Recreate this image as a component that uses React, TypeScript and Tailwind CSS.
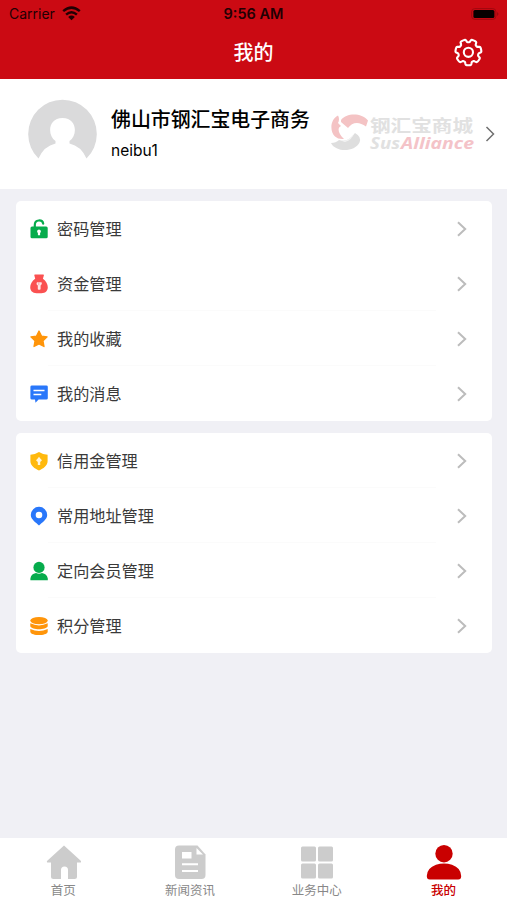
import type { ReactNode } from "react";

type Row = { label: string; icon: ReactNode; divider?: string };

// Seven-toothed cog outline built from polar coordinates.
const TEETH = 7;
const cogPath = (() => {
  const steps = 140;
  const points: string[] = [];
  for (let i = 0; i < steps; i++) {
    const a = (i / steps) * Math.PI * 2;
    const wave = Math.cos(TEETH * (a - Math.PI / 2));
    const r = 11.5 + 1.5 * Math.tanh(wave * 2.8 + 0.9);
    points.push(`${(15.4 + r * Math.cos(a)).toFixed(2)} ${(15.3 + r * Math.sin(a)).toFixed(2)}`);
  }
  return `M${points.join("L")}Z`;
})();

function Cog() {
  return (
    <svg className="h-[30px] w-[30px]" viewBox="0 0 30 30" fill="none" stroke="#fff" strokeWidth="2.1" strokeLinejoin="round">
      <path d={cogPath} />
      <circle cx="15.400" cy="15.300" r="4.600" />
    </svg>
  );
}

function Wifi() {
  return (
    <svg className="h-[15px] w-[19px]" viewBox="0 0 19 15" fill="none" stroke="#220003" strokeWidth="2.5">
      <path d="M1.200 5.100Q9.500-1.900 17.800 5.100" />
      <path d="M4.100 8.600Q9.500 3.900 14.900 8.600" />
      <path d="M9.500 14.200 6.200 11Q9.500 8.200 12.800 11Z" fill="#220003" stroke="none" />
    </svg>
  );
}

function Chevron() {
  return (
    <svg className="h-4 w-[10px]" viewBox="0 0 10 16" fill="none" stroke="#bcbcbc" strokeWidth="2">
      <path d="M1 1.200 8.200 8 1 14.800" />
    </svg>
  );
}

function Glyph({ children }: { children: ReactNode }) {
  return (
    <svg className="h-5 w-5 shrink-0" viewBox="0 0 20 20">
      {children}
    </svg>
  );
}

const account: Row[] = [
  {
    label: "密码管理",
    icon: (
      <Glyph>
        <path d="M5.800 9V5.900C5.800.2 13.500.2 14.200 4.700" fill="none" stroke="#06ac4c" strokeWidth="2.200" strokeLinecap="round" />
        <rect x="1.500" y="7.400" width="17.200" height="11.800" rx="1.500" fill="#06ac4c" />
        <path d="M10 10.400a2 2 0 0 1 1.100 3.600v2.300H8.900V14A2 2 0 0 1 10 10.400Z" fill="#fff" />
      </Glyph>
    ),
  },
  {
    label: "资金管理",
    divider: "ml-8",
    icon: (
      <Glyph>
        <path d="M5.800.6h8.600q.7 0 .5.700l-1 3.400c6.500 4.400 7 14.500-1.500 14.500H7.600c-8.500 0-8-10.100-1.400-14.500L5.300 1.300Q5.100.6 5.800.6Z" fill="#fa5151" />
        <path d="M8 8.200h4.500q.8 1 0 2.200l-.9 1.100v3.700q-1.500 1-2.800 0v-3.700L7.700 10.400Q7.300 9 8 8.200Z" fill="#fff" opacity=".85" />
        <path d="M9.800 8.200v3" stroke="#fa9a9a" strokeWidth=".8" />
      </Glyph>
    ),
  },
  {
    label: "我的收藏",
    divider: "ml-8",
    icon: (
      <Glyph>
        <path d="m10 2 2.500 5.100 5.600.8-4.100 4 1 5.600-5-2.600-5 2.600 1-5.600-4.100-4 5.600-.8Z" fill="#ff950a" stroke="#ff950a" strokeWidth="1.300" strokeLinejoin="round" />
      </Glyph>
    ),
  },
  {
    label: "我的消息",
    icon: (
      <Glyph>
        <path d="M3 1.400h14.300q1.500 0 1.500 1.400v11.400q0 1.400-1.500 1.400H9.600L6.500 18.700 6 15.600H3Q1.400 15.600 1.400 14.200V2.800Q1.400 1.400 3 1.400Z" fill="#2977fa" />
        <path d="M4.500 6.500h11M4.500 10.400h7.800" stroke="#fff" strokeWidth="1.500" />
      </Glyph>
    ),
  },
];

const members: Row[] = [
  {
    label: "信用金管理",
    divider: "ml-8",
    icon: (
      <Glyph>
        <path d="M10 .9q4.200 2.700 8.600 2.900v6.500c0 4.300-4.300 7.500-8.600 9.100-4.300-1.600-8.600-4.800-8.600-9.100V3.800Q5.800 3.600 10 .9Z" fill="#ffb90d" />
        <path d="M10 5.800 11.300 7.600 13 9.300 11.200 11v2.900H8.800V11L7 9.300 8.700 7.600Z" fill="#fff" opacity=".85" />
      </Glyph>
    ),
  },
  {
    label: "常用地址管理",
    divider: "ml-8",
    icon: (
      <Glyph>
        <path fillRule="evenodd" d="M10 .8a8.100 8.100 0 0 1 8.200 8.100c0 4.500-5.600 7.800-8.200 10.500C7.400 16.700 1.800 13.400 1.800 8.900A8.100 8.100 0 0 1 10 .8Zm0 4.900a3.300 3.300 0 1 0 0 6.600 3.300 3.300 0 0 0 0-6.600Z" fill="#2977fa" />
      </Glyph>
    ),
  },
  {
    label: "定向会员管理",
    divider: "ml-8",
    icon: (
      <Glyph>
        <circle cx="10" cy="6.400" r="5.600" fill="#06ac4c" />
        <path d="M1.400 19.200V17.500Q2 13 7 12.100q3 1.300 6 0 5 .9 5.800 5.400V19.200Z" fill="#06ac4c" />
      </Glyph>
    ),
  },
  {
    label: "积分管理",
    icon: (
      <Glyph>
        <ellipse cx="10" cy="4.600" rx="8.700" ry="3.700" fill="#ff950a" />
        <path d="M1.300 7.300q8.700 4.200 17.400 0v2.900c-1.500 4-15.900 4-17.400 0ZM1.300 12.900q8.700 4.200 17.400 0v3c-1.500 4.200-15.900 4.200-17.400 0Z" fill="#ff950a" />
      </Glyph>
    ),
  },
];

function Card({ rows }: { rows: Row[] }) {
  return (
    <section className="h-[220px] rounded-[5px] bg-white">
      {rows.map((row) => (
        <div key={row.label}>
          <div className={row.divider ? "h-[54px]" : "h-[55px]"}>
            <div className="flex h-[55px] items-center pr-[25px] pl-[13px]">
              {row.icon}
              <span className="ml-[8px] flex-1 text-[16.150px] leading-6 text-[#3a3a3a]">{row.label}</span>
              <Chevron />
            </div>
          </div>
          {row.divider && <div className={`mr-14 h-px bg-[#fbfbfb] ${row.divider}`} />}
        </div>
      ))}
    </section>
  );
}

function Brand() {
  return (
    <div className="flex h-[42px] w-[146px] gap-[2px]">
      <svg className="h-[42px] w-[38px] shrink-0" viewBox="0 0 38 42">
        <path d="M8 2.500C-.5 7 0 19 5 23.500Q8 26.500 14 26C8 20 7 15 11 13L8 10Q10 6 8 2.500Z" fill="#f4c3c4" />
        <path d="M11 7C16 0 31-1 38 7.500L36 13.500C29 8 22 9 18 15L11 9Z" fill="#f4c3c4" />
        <path d="M1 30Q6 30 9 27Q18 30 25 20Q32 24 29.500 29.500C25 39 6 40 1 30Z" fill="#dedede" />
        <path d="M9 27Q18 30 24 20.500Q22 27 15 29Z" fill="#f3f3f3" />
      </svg>
      <div className="flex flex-col">
        <svg className="mt-[5px] h-[17px] w-[104px] overflow-visible" viewBox="0 0 104 17">
          <text x="0" y="14.300" textLength="103" lengthAdjust="spacingAndGlyphs" fontFamily="Noto Sans CJK SC, sans-serif" fontSize="16.500" fontWeight="700" fill="#e1e1e1">钢汇宝商城</text>
        </svg>
        <div className="flex h-[16px]">
          <svg className="h-[16px] w-[31px] overflow-visible" viewBox="0 0 31 16">
            <text x="0" y="14" textLength="30" lengthAdjust="spacingAndGlyphs" fontFamily="Open Sans, sans-serif" fontSize="15.500" fontWeight="700" fontStyle="italic" fill="#e1e1e1">Sus</text>
          </svg>
          <svg className="h-[16px] w-[74px] overflow-visible" viewBox="0 0 74 16">
            <text x="0" y="14" textLength="73" lengthAdjust="spacingAndGlyphs" fontFamily="Open Sans, sans-serif" fontSize="15.500" fontWeight="700" fontStyle="italic" fill="#f4c3c8">Alliance</text>
          </svg>
        </div>
      </div>
    </div>
  );
}

const tabs = [
  {
    label: "首页",
    active: false,
    icon: <path d="M19 1.500 36 17q.5 1.500-1 1.500h-3v14q0 2.500-2.500 2.500h-6.500V26a3.500 3.500 0 0 0-7 0v9H8.500q-2.500 0-2.500-2.500v-14h-3q-1.500 0-1-1.500Z" fill="#ccc" />,
  },
  {
    label: "新闻资讯",
    active: false,
    icon: (
      <>
        <path d="M7 1.500h18.500L33.500 10.500v20.500q0 4-4 4H7q-4 0-4-4v-25.500q0-4 4-4Z" fill="#ccc" />
        <path d="M24.500 4v6.500H31ZM10 8h9.500v6.500h-9.500ZM10 19.300h16v2h-16ZM10 26h16v2h-16Z" fill="#fff" />
      </>
    ),
  },
  {
    label: "业务中心",
    active: false,
    icon: (
      <g fill="#ccc">
        <rect x="2" y="2.500" width="15" height="15" rx="1.500" />
        <rect x="19" y="2.500" width="15" height="15" rx="1.500" />
        <rect x="2" y="19.500" width="15" height="15" rx="1.500" />
        <rect x="19" y="19.500" width="15" height="15" rx="1.500" />
      </g>
    ),
  },
  {
    label: "我的",
    active: true,
    icon: (
      <g fill="#c90000">
        <circle cx="18" cy="9.700" r="8.700" />
        <path d="M.8 32Q1 24 10 20.800q8-2.500 16 0Q35 24 35.200 32q0 3.500-3 3.500H3.800q-3 0-3-3.500Z" />
      </g>
    ),
  },
];

export default function App() {
  return (
    <div className="flex h-[900px] w-full flex-col overflow-hidden bg-[#f0f0f5] font-['Inter','Noto_Sans_CJK_SC',sans-serif]">
      <header className="h-[79px] bg-[#cb0a13] shadow-[0_1px_0_#f8d5d7]">
        <div className="grid h-[27px] grid-cols-3 items-center px-2 text-[14px] leading-none text-[#220003]">
          <div className="flex items-center gap-[6px] pl-px">
            <span className="w-[47px] whitespace-nowrap">Carrier</span>
            <Wifi />
          </div>
          <span className="pt-px text-center text-[14.500px] font-semibold">9:56 AM</span>
          <svg className="h-3 w-7 justify-self-end" viewBox="0 0 28 12">
            <rect x=".6" y=".6" width="24.300" height="10.800" rx="3.200" fill="none" stroke="#a0080f" />
            <rect x="2.400" y="2" width="21" height="8" rx="1.500" fill="#080000" />
            <path d="M26.300 4q2 2 0 4Z" fill="#870910" />
          </svg>
        </div>
        <div className="grid h-[50px] grid-cols-3 items-center px-6">
          <h1 className="col-start-2 pt-[2px] text-center text-[20px] font-medium text-white">我的</h1>
          <button className="justify-self-end" aria-label="设置"><Cog /></button>
        </div>
      </header>

      <section className="flex h-[110px] shrink-0 items-center bg-white pr-3 pl-7">
        <svg className="h-[70px] w-[69px] shrink-0" viewBox="0 0 69 70">
          <path d="M10.500 59.500A34.300 34.300 0 1 1 58.500 59.500Q53 47 41.500 44.500V42C50 36 49 19 34.500 19S19 36 27.500 42V44.500Q16 47 10.500 59.500Z" fill="#dadadb" />
        </svg>
        <div className="ml-[14px] w-[200px] pt-[2px] whitespace-nowrap text-black">
          <div className="text-[19.900px] leading-8 font-medium">佛山市钢汇宝电子商务</div>
          <div className="text-[15.500px] leading-[30px]">neibu1</div>
        </div>
        <div className="ml-[19px] flex flex-1 items-center justify-between">
          <Brand />
          <svg className="h-4 w-[10px]" viewBox="0 0 10 16" fill="none" stroke="#707070" strokeWidth="1.500">
            <path d="M1.500 1 8.500 8 1.500 15" />
          </svg>
        </div>
      </section>

      <main className="flex flex-1 flex-col gap-3 px-4 pt-3 pr-[15px]">
        <Card rows={account} />
        <Card rows={members} />
      </main>

      <nav className="grid h-[62px] shrink-0 grid-cols-4 bg-white">
        {tabs.map((tab) => (
          <div key={tab.label} className="flex flex-col items-center pt-[6px]">
            <svg className="h-9 w-9" viewBox="0 0 36 36">{tab.icon}</svg>
            <span className={tab.active ? "mt-px text-[12.500px] leading-5 font-medium text-[#c90000]" : "mt-px text-[12.500px] leading-5 text-[#888]"}>
              {tab.label}
            </span>
          </div>
        ))}
      </nav>
    </div>
  );
}
